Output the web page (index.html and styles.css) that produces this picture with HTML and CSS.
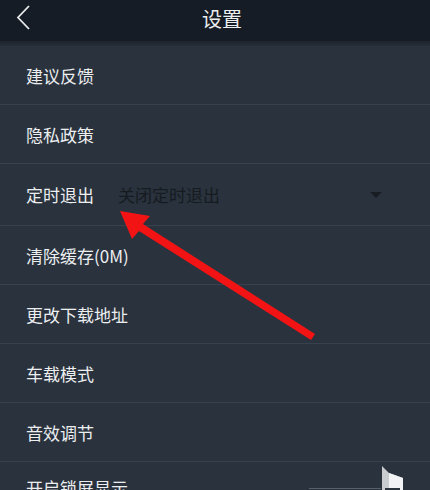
FILE: index.html
```html
<!DOCTYPE html>
<html lang="zh-CN">
<head>
  <meta charset="UTF-8">
  <meta name="viewport" content="width=device-width, initial-scale=1.0">
  <title>设置</title>
  <link rel="stylesheet" href="styles.css">
</head>
<body>
  <div class="screen">
    <div class="topbar">
      <svg class="back" width="20" height="28" viewBox="0 0 20 28">
        <path d="M15 3 L4 14.5 L15 26" fill="none" stroke="#e8eaec" stroke-width="1.8"/>
      </svg>
      <div class="title">设置</div>
    </div>
    <div class="shade"></div>
    <ul class="list">
      <li class="row">建议反馈</li>
      <li class="row">隐私政策</li>
      <li class="row tall">
        <span>定时退出</span>
        <div class="spinner">
          <span class="spinner-text">关闭定时退出</span>
          <span class="caret"></span>
        </div>
      </li>
      <li class="row">清除缓存(0M)</li>
      <li class="row">更改下载地址</li>
      <li class="row">车载模式</li>
      <li class="row">音效调节</li>
      <li class="row last">
        <span class="last-label">开启锁屏显示</span>
        <div class="toggle">
          <span class="track"></span>
          <svg class="flag" width="24" height="26" viewBox="0 0 24 26">
            <path d="M1 0 L8 7 L22 12 L22 26 L1 26 Z" fill="#c9cdd0"/>
            <path d="M8 7 L22 12 L22 26 L8 26 Z" fill="#f2f3f4"/>
            <path d="M4 22 L19 22 L19 26 L4 26 Z" fill="#2b333d"/>
          </svg>
        </div>
      </li>
    </ul>
    <svg class="arrow" width="430" height="490" viewBox="0 0 430 490">
      <path d="M120 211 L150 216 L143 224 L315 334 L311 340 L139 231 L132 239 Z" fill="#f21414"/>
    </svg>
  </div>
</body>
</html>
```

FILE: styles.css
```css
body {
  margin: 0;
  font-family: "Noto Sans CJK SC", "Noto Sans", sans-serif;
  background-color: #29323d;
}
.screen {
  position: relative;
  width: 430px;
  height: 490px;
  overflow: hidden;
  background-color: #29323d;
}
.topbar {
  height: 41px;
  background-color: #161c25;
  display: flex;
  align-items: center;
  justify-content: center;
  position: relative;
}
.back {
  position: absolute;
  left: 14px;
  top: 3px;
}
.title {
  color: #eceef0;
  font-size: 20px;
  margin-left: 14px;
  margin-top: -4px;
}
.shade {
  height: 5px;
  background: linear-gradient(#1d242d, #252d38);
}
.list {
  list-style: none;
  margin: 0;
  padding: 0;
}
.row {
  height: 58px;
  border-bottom: 1px solid #38414c;
  display: flex;
  align-items: center;
  padding-left: 26px;
  color: #eceef0;
  font-size: 17px;
}
.row.tall {
  height: 61px;
}
.spinner {
  display: flex;
  align-items: center;
  flex: 1;
  margin-left: 24px;
  margin-right: 48px;
  justify-content: space-between;
}
.spinner-text {
  color: #161b21;
}
.caret {
  width: 0;
  height: 0;
  border-left: 6px solid transparent;
  border-right: 6px solid transparent;
  border-top: 6px solid #181d24;
}
.row.last {
  align-items: flex-start;
  justify-content: space-between;
  border-bottom: none;
  height: auto;
  padding-top: 4px;
}
.last-label {
  margin-top: 9px;
}
.toggle {
  display: flex;
  align-items: flex-end;
  margin-right: 25px;
}
.track {
  width: 72px;
  height: 1px;
  background-color: #56606b;
  margin-bottom: 3px;
}
.arrow {
  position: absolute;
  left: 0;
  top: 0;
}
```
